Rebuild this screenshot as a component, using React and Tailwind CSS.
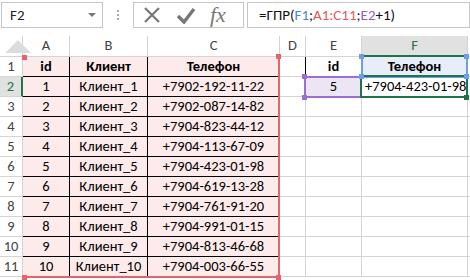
const cols = [
  { key: 'A', w: 'w-[47px]' },
  { key: 'B', w: 'w-[78px]' },
  { key: 'C', w: 'w-[132px]' },
  { key: 'D', w: 'w-[26px]' },
  { key: 'E', w: 'w-[56px]' },
  { key: 'F', w: 'w-[106px]' },
];

const clients = [
  ['1', 'Клиент_1', '+7902-192-11-22'],
  ['2', 'Клиент_2', '+7902-087-14-82'],
  ['3', 'Клиент_3', '+7904-823-44-12'],
  ['4', 'Клиент_4', '+7904-113-67-09'],
  ['5', 'Клиент_5', '+7904-423-01-98'],
  ['6', 'Клиент_6', '+7904-619-13-28'],
  ['7', 'Клиент_7', '+7904-761-91-20'],
  ['8', 'Клиент_8', '+7904-991-01-15'],
  ['9', 'Клиент_9', '+7904-813-46-68'],
  ['10', 'Клиент_10', '+7904-003-66-55'],
];

function Cell({ w, className = '', children }) {
  return (
    <div className={`${w} h-full shrink-0 flex items-center justify-center whitespace-nowrap border-r border-b border-[#d4d4d4] ${className}`}>
      {children}
    </div>
  );
}

function Row({ n, cells, selected }) {
  return (
    <div className="flex h-[20px]">
      <div
        className={`w-[23px] h-full shrink-0 flex items-center justify-center text-[14.5px] border-b border-[#d4d4d4] ${
          selected ? 'bg-[#e1e1e1] text-[#217346] border-r-2 border-r-[#217346]' : 'text-[#444] border-r border-r-[#d4d4d4]'
        }`}
      >
        {n}
      </div>
      {cols.map((c, i) => (
        <Cell key={c.key} w={c.w} className={cells[i]?.cls}>
          {cells[i]?.v}
        </Cell>
      ))}
      <div className="flex-1 h-full border-b border-[#d4d4d4]" />
    </div>
  );
}

const pink = 'bg-[#fdeaea] border-r-black border-b-black';

function buildRows() {
  const rows = [];
  rows.push({
    n: 1,
    cells: [
      { v: 'id', cls: `${pink} font-bold` },
      { v: 'Клиент', cls: `${pink} font-bold` },
      { v: 'Телефон', cls: `${pink} font-bold` },
      { v: '', cls: 'border-r-black' },
      { v: 'id', cls: 'font-bold border-r-black border-b-black' },
      { v: 'Телефон', cls: 'font-bold bg-[#e7edf9] border-b-black' },
    ],
  });
  clients.forEach((c, i) => {
    const extra =
      i === 0
        ? [
            { v: '' },
            { v: '5', cls: 'bg-[#ece6f4]' },
            { v: '+7904-423-01-98', cls: 'justify-start pl-[3px]' },
          ]
        : [];
    rows.push({
      n: i + 2,
      selected: i === 0,
      cells: [
        { v: c[0], cls: pink },
        { v: c[1], cls: pink },
        { v: c[2], cls: pink },
        ...extra,
      ],
    });
  });
  return rows;
}

function Corner({ className }) {
  return <div className={`absolute w-[5px] h-[5px] ${className}`} />;
}

export default function App() {
  const rows = buildRows();
  return (
    <div className="w-[470px] h-[280px] overflow-hidden bg-white text-black font-['Calibri','Carlito','Lato',sans-serif]">
      {/* formula bar */}
      <div className="flex items-start h-[36px] pt-[2px] pl-[1px]">
        <div className="w-[102px] h-[26px] border border-[#c6c6c6] flex items-center justify-between pl-[8px] pr-[6px] text-[15px] text-[#222]">
          <span>F2</span>
          <span className="w-0 h-0 border-l-[4px] border-r-[4px] border-t-[4px] border-l-transparent border-r-transparent border-t-[#777]" />
        </div>
        <div className="w-[30px] h-[26px] flex flex-col items-center justify-center gap-[2px]">
          <span className="w-[2px] h-[2px] bg-[#aaa]" />
          <span className="w-[2px] h-[2px] bg-[#aaa]" />
          <span className="w-[2px] h-[2px] bg-[#aaa]" />
        </div>
        <div className="w-[111px] h-[26px] border border-[#c6c6c6] flex items-center pl-[8px] gap-[14px]">
          <svg width="20" height="18" viewBox="0 0 20 18">
            <path d="M3 2 L17 16 M17 2 L3 16" stroke="#777" strokeWidth="2.2" fill="none" />
          </svg>
          <svg width="20" height="18" viewBox="0 0 20 18">
            <path d="M2 10 L8 16 L18 3" stroke="#777" strokeWidth="3.4" fill="none" />
          </svg>
          <span className="font-['Liberation_Serif',serif] italic text-[22px] text-[#777] leading-none">fx</span>
        </div>
        <div className="flex-1 h-[26px] ml-[3px] border border-[#c6c6c6] flex items-center pl-[11px] text-[15px] text-[#111]">
          <span>=ГПР(</span>
          <span className="text-[#4a86e0]">F1</span>
          <span>;</span>
          <span className="text-[#e4585d]">A1:C11</span>
          <span>;</span>
          <span className="text-[#8a5ec6]">E2</span>
          <span>+1)</span>
        </div>
      </div>

      {/* sheet */}
      <div className="relative">
        <div className="flex h-[21px] text-[14.5px] text-[#444]">
          <div className="w-[23px] h-full shrink-0 flex items-end justify-end pr-[4px] pb-[3px] border-r border-b border-[#d4d4d4]">
            <div className="w-0 h-0 border-l-[13px] border-t-[13px] border-l-transparent border-t-transparent border-b-0 border-r-[13px] border-r-transparent border-b-[13px] border-b-[#dcdcdc] -mr-[13px]" />
          </div>
          {cols.map((c) => (
            <div
              key={c.key}
              className={`${c.w} h-full shrink-0 flex items-center justify-center border-r border-[#d4d4d4] ${
                c.key === 'F' ? 'bg-[#e1e1e1] text-[#217346] border-b-2 border-b-[#217346]' : 'border-b border-b-[#d4d4d4]'
              }`}
            >
              {c.key}
            </div>
          ))}
          <div className="flex-1 h-full border-b border-[#d4d4d4]" />
        </div>
        <div className="text-[14.5px]">
          {rows.map((r) => (
            <Row key={r.n} n={r.n} cells={r.cells} selected={r.selected} />
          ))}
        </div>

        {/* A1:C11 reference range */}
        <div className="absolute left-[22px] top-[20px] w-[258px] h-[222px] border-r-2 border-b-2 border-[#e4646a]" />
        <Corner className="left-[22px] top-[19px] w-[3px] h-[3px] bg-[#e4646a]" />
        <Corner className="left-[276px] top-[18px] bg-[#e4646a]" />
        <Corner className="left-[22px] top-[239px] bg-[#e4646a]" />
        <Corner className="left-[276px] top-[239px] bg-[#e4646a]" />

        {/* F1 reference */}
        <div className="absolute left-[361px] top-[20px] w-[107px] h-[22px] border-2 border-[#6d9ee8] border-t-transparent" />
        <Corner className="left-[359px] top-[18px] bg-[#6d9ee8]" />
        <Corner className="left-[464px] top-[18px] bg-[#6d9ee8]" />

        {/* E2 reference */}
        <div className="absolute left-[304px] top-[40px] w-[58px] h-[22px] border-2 border-[#9a6fd0]" />
        <Corner className="left-[302px] top-[38px] bg-[#9a6fd0]" />
        <Corner className="left-[302px] top-[59px] bg-[#9a6fd0]" />

        {/* F2 selection */}
        <div className="absolute left-[360px] top-[39px] w-[108px] h-[23px] border-2 border-[#217346]" />
        <Corner className="left-[359px] top-[38px] bg-[#6d9ee8]" />
        <Corner className="left-[464px] top-[38px] bg-[#6d9ee8]" />
        <Corner className="left-[464px] top-[59px] bg-[#217346]" />
      </div>
    </div>
  );
}
